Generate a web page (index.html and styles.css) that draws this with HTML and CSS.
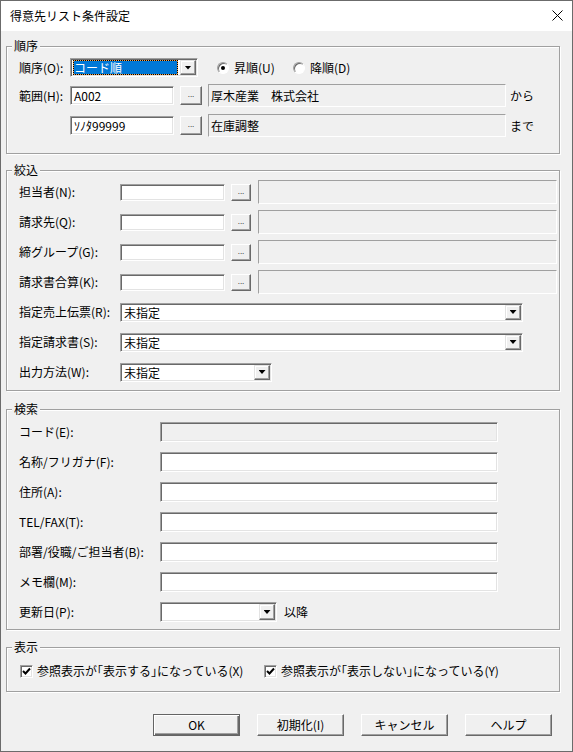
FILE: index.html
```html
<!DOCTYPE html>
<html lang="ja">
<head>
    <meta charset="UTF-8">
    <title>得意先リスト条件設定</title>
    <link rel="stylesheet" href="styles.css">
</head>
<body>

<div class="window">
    <div class="titlebar">
        <span class="title">得意先リスト条件設定</span>
        <svg class="close" width="11" height="11" viewBox="0 0 11 11">
            <path d="M0.5 0.5 L10.5 10.5 M10.5 0.5 L0.5 10.5" stroke="#000" stroke-width="1" fill="none"/>
        </svg>
    </div>

    <div class="content">
        <!-- 順序 -->
        <fieldset class="group group-order">
            <legend>順序</legend>
            <div class="row row-sort">
                <span class="lbl">順序(O):</span>
                <div class="combo combo-sort">
                    <span class="combo-value"><span class="selected">コード順</span></span>
                    <span class="combo-arrow"></span>
                </div>
                <span class="option option-asc"><span class="radio checked"></span>昇順(U)</span>
                <span class="option"><span class="radio"></span>降順(D)</span>
            </div>
            <div class="row row-range">
                <span class="lbl">範囲(H):</span>
                <div class="field">A002</div>
                <span class="dots">...</span>
                <div class="static">厚木産業　株式会社</div>
                <span class="suffix">から</span>
            </div>
            <div class="row row-range">
                <span class="lbl"></span>
                <div class="field">ｿﾉﾀ99999</div>
                <span class="dots">...</span>
                <div class="static">在庫調整</div>
                <span class="suffix">まで</span>
            </div>
        </fieldset>

        <!-- 絞込 -->
        <fieldset class="group group-filter">
            <legend>絞込</legend>
            <div class="row">
                <span class="lbl">担当者(N):</span>
                <div class="field"></div>
                <span class="dots">...</span>
                <div class="static"></div>
            </div>
            <div class="row">
                <span class="lbl">請求先(Q):</span>
                <div class="field"></div>
                <span class="dots">...</span>
                <div class="static"></div>
            </div>
            <div class="row">
                <span class="lbl">締グループ(G):</span>
                <div class="field"></div>
                <span class="dots">...</span>
                <div class="static"></div>
            </div>
            <div class="row">
                <span class="lbl">請求書合算(K):</span>
                <div class="field"></div>
                <span class="dots">...</span>
                <div class="static"></div>
            </div>
            <div class="row">
                <span class="lbl">指定売上伝票(R):</span>
                <div class="combo combo-wide">
                    <span class="combo-value">未指定</span>
                    <span class="combo-arrow"></span>
                </div>
            </div>
            <div class="row">
                <span class="lbl">指定請求書(S):</span>
                <div class="combo combo-wide">
                    <span class="combo-value">未指定</span>
                    <span class="combo-arrow"></span>
                </div>
            </div>
            <div class="row">
                <span class="lbl">出力方法(W):</span>
                <div class="combo combo-output">
                    <span class="combo-value">未指定</span>
                    <span class="combo-arrow"></span>
                </div>
            </div>
        </fieldset>

        <!-- 検索 -->
        <fieldset class="group group-search">
            <legend>検索</legend>
            <div class="row">
                <span class="lbl">コード(E):</span>
                <div class="field disabled"></div>
            </div>
            <div class="row">
                <span class="lbl">名称/フリガナ(F):</span>
                <div class="field"></div>
            </div>
            <div class="row">
                <span class="lbl">住所(A):</span>
                <div class="field"></div>
            </div>
            <div class="row">
                <span class="lbl">TEL/FAX(T):</span>
                <div class="field"></div>
            </div>
            <div class="row">
                <span class="lbl">部署/役職/ご担当者(B):</span>
                <div class="field"></div>
            </div>
            <div class="row">
                <span class="lbl">メモ欄(M):</span>
                <div class="field"></div>
            </div>
            <div class="row">
                <span class="lbl">更新日(P):</span>
                <div class="combo combo-date">
                    <span class="combo-value"></span>
                    <span class="combo-arrow"></span>
                </div>
                <span class="suffix">以降</span>
            </div>
        </fieldset>

        <!-- 表示 -->
        <fieldset class="group group-view">
            <legend>表示</legend>
            <div class="row">
                <span class="check-item check-first">
                    <span class="checkbox"><svg width="9" height="9" viewBox="0 0 9 9"><path d="M1 4 L3.5 6.5 L8 1.5" stroke="#000" stroke-width="2" fill="none"/></svg></span>参照表示が｢表示する｣になっている(X)
                </span>
                <span class="check-item">
                    <span class="checkbox"><svg width="9" height="9" viewBox="0 0 9 9"><path d="M1 4 L3.5 6.5 L8 1.5" stroke="#000" stroke-width="2" fill="none"/></svg></span>参照表示が｢表示しない｣になっている(Y)
                </span>
            </div>
        </fieldset>

        <div class="buttons">
            <button class="btn default">OK</button>
            <button class="btn">初期化(I)</button>
            <button class="btn">キャンセル</button>
            <button class="btn">ヘルプ</button>
        </div>
    </div>
</div>

</body>
</html>
```

FILE: styles.css
```css
* {
    margin: 0;
    padding: 0;
    box-sizing: border-box;
}

body {
    font-family: "Noto Sans CJK JP", "Liberation Sans", sans-serif;
    font-size: 12px;
    color: #000;
    background-color: #f0f0f0;
}

.window {
    width: 573px;
    height: 752px;
    border: 1px solid #6b6b6b;
    background-color: #f0f0f0;
    display: flex;
    flex-direction: column;
}

/* Title bar */
.titlebar {
    height: 30px;
    background-color: #fff;
    display: flex;
    align-items: center;
    justify-content: space-between;
    padding: 0 9px 0 9px;
    flex-shrink: 0;
}

.title {
    font-size: 12px;
    line-height: 14px;
}

.close {
    margin-top: -2px;
}

.content {
    padding: 0 0 0 5px;
}

/* Group boxes */
.group {
    width: 554px;
    min-width: 0;
    border: 1px solid #a0a0a0;
    box-shadow: inset 1px 1px #fff, 1px 1px #fff;
    padding: 0 0 0 12px;
}

.group legend {
    margin-left: -7px;
    padding: 0 2px;
    line-height: 14px;
    background-color: #f0f0f0;
}

.group-order {
    margin-top: 8px;
    padding-top: 5px;
    padding-bottom: 16px;
}

.group-filter {
    margin-top: 9px;
    padding-bottom: 3px;
}

.group-search {
    margin-top: 11px;
    padding-top: 1px;
    padding-bottom: 2px;
}

.group-view {
    margin-top: 10px;
    padding-top: 7px;
    padding-bottom: 10px;
    padding-left: 13px;
}

.group-view legend {
    margin-left: -8px;
}

.row {
    display: flex;
    align-items: center;
    height: 30px;
    white-space: nowrap;
}

.lbl {
    flex-shrink: 0;
    line-height: 14px;
}

/* 順序 group rows */
.group-order .row {
    height: 23px;
}

.group-order .row-sort {
    height: 19px;
    margin-bottom: 7px;
}

.group-order .row-range + .row-range {
    margin-top: 7px;
}

.group-order .lbl {
    width: 51px;
}

.group-filter .lbl {
    width: 101px;
}

.group-search .lbl {
    width: 141px;
}

/* Sunken edit field */
.field {
    height: 20px;
    width: 338px;
    border: 1px solid;
    border-color: #a0a0a0 #fff #fff #a0a0a0;
    box-shadow: inset 1px 1px #696969, inset -1px -1px #e3e3e3;
    background-color: #fff;
    padding: 0 3px;
    line-height: 17px;
    flex-shrink: 0;
}

.field.disabled {
    background-color: #f0f0f0;
}

.group-order .field {
    width: 104px;
    height: 19px;
}

.group-filter .field {
    width: 105px;
    height: 17px;
}

/* Browse button */
.dots {
    flex-shrink: 0;
    height: 19px;
    width: 22px;
    margin-left: 6px;
    border: 1px solid;
    border-color: #fff #696969 #696969 #fff;
    box-shadow: inset -1px -1px #a0a0a0;
    background-color: #f0f0f0;
    font-family: "Liberation Sans", sans-serif;
    font-size: 8px;
    line-height: 16px;
    text-align: center;
    letter-spacing: 0;
}

.group-filter .dots {
    width: 20px;
    height: 17px;
    line-height: 14px;
}

/* Static read-only box */
.static {
    flex-shrink: 0;
    height: 23px;
    width: 298px;
    margin-left: 6px;
    border: 1px solid;
    border-color: #a0a0a0 #fff #fff #a0a0a0;
    padding: 0 2px;
    line-height: 21px;
}

.group-filter .static {
    width: 299px;
    height: 24px;
    margin-left: 7px;
}

.suffix {
    margin-left: 4px;
    line-height: 14px;
}

.group-search .suffix {
    margin-left: 7px;
}

/* Combo box */
.combo {
    flex-shrink: 0;
    display: flex;
    height: 19px;
    border: 1px solid;
    border-color: #a0a0a0 #fff #fff #a0a0a0;
    box-shadow: inset 1px 1px #696969, inset -1px -1px #e3e3e3;
    background-color: #fff;
    padding: 1px;
}

.combo-value {
    flex: 1;
    display: flex;
    padding: 1px 1px 0 2px;
    line-height: 14px;
    overflow: hidden;
}

.combo-value .selected {
    flex: 1;
    color: #fff;
    border: 1px dotted #000;
    background: linear-gradient(#0078d7, #0078d7) padding-box, linear-gradient(#f7a24a, #f7a24a) border-box;
    line-height: 13px;
    margin: -1px 1px 0 -1px;
}

.combo-arrow {
    width: 16px;
    flex-shrink: 0;
    border: 1px solid;
    border-color: #e3e3e3 #696969 #696969 #e3e3e3;
    box-shadow: inset -1px -1px #a0a0a0, inset 1px 1px #fff;
    background-color: #f0f0f0;
    display: flex;
    align-items: center;
    justify-content: center;
}

.combo-arrow::after {
    content: "";
    width: 7px;
    height: 4px;
    background-color: #000;
    clip-path: polygon(0 0, 100% 0, 50% 100%);
}

.combo-sort {
    width: 128px;
}

.combo-wide {
    width: 403px;
}

.combo-output {
    width: 152px;
}

.combo-date {
    width: 117px;
    height: 20px;
}

/* Radio buttons */
.option {
    display: flex;
    align-items: center;
    line-height: 14px;
}

.option-asc {
    width: 76px;
    margin-left: 19px;
}

.radio {
    width: 12px;
    height: 12px;
    border-radius: 50%;
    border: 1px solid;
    border-color: #a0a0a0 #fff #fff #a0a0a0;
    box-shadow: inset 1px 1px #696969;
    background-color: #fff;
    margin-right: 5px;
    display: flex;
    align-items: center;
    justify-content: center;
}

.radio.checked::after {
    content: "";
    width: 4px;
    height: 4px;
    border-radius: 50%;
    background-color: #000;
}

/* Check boxes */
.group-view .row {
    height: 20px;
}

.check-item {
    display: flex;
    align-items: center;
    line-height: 14px;
}

.check-first {
    width: 244px;
}

.checkbox {
    width: 13px;
    height: 13px;
    border: 1px solid;
    border-color: #a0a0a0 #fff #fff #a0a0a0;
    box-shadow: inset 1px 1px #696969, inset -1px -1px #e3e3e3;
    background-color: #fff;
    margin-right: 4px;
    display: flex;
    align-items: center;
    justify-content: center;
}

/* Dialog buttons */
.buttons {
    display: flex;
    gap: 17px;
    margin-top: 22px;
    padding-left: 147px;
}

.btn {
    width: 87px;
    height: 22px;
    font-family: inherit;
    font-size: 12px;
    color: #000;
    border: 1px solid;
    border-color: #fff #696969 #696969 #fff;
    box-shadow: inset -1px -1px #a0a0a0;
    background-color: #f0f0f0;
    line-height: 18px;
}

.btn.default {
    border-color: #646464;
    box-shadow: inset 1px 1px #fff, inset -1px -1px #696969, inset -2px -2px #a0a0a0;
}
```
